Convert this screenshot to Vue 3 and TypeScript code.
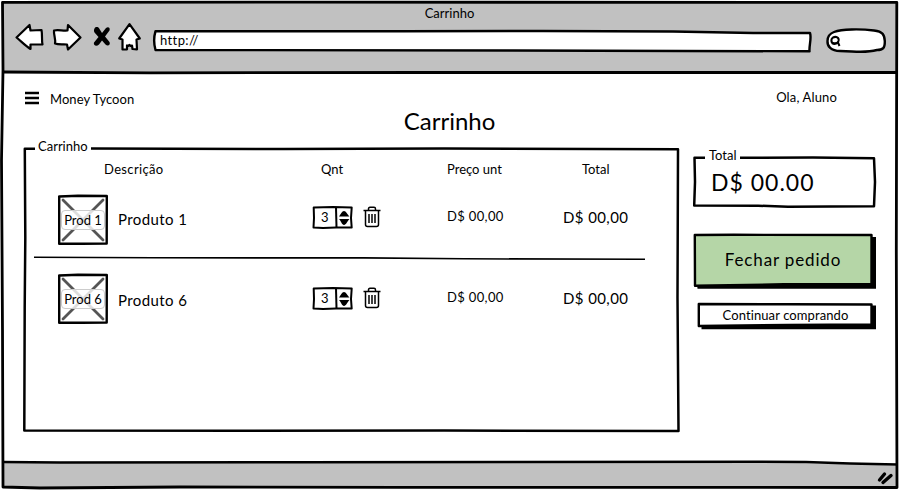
<script setup lang="ts">
interface CartItem {
  id: number
  thumb: string
  name: string
  quantity: number
  unitPrice: string
  total: string
}

const items: CartItem[] = [
  { id: 1, thumb: 'Prod 1', name: 'Produto 1', quantity: 3, unitPrice: 'D$ 00,00', total: 'D$ 00,00' },
  { id: 6, thumb: 'Prod 6', name: 'Produto 6', quantity: 3, unitPrice: 'D$ 00,00', total: 'D$ 00,00' },
]
</script>

<template>
  <div class="window">
    <svg class="sketch" width="899" height="490" viewBox="0 0 899 490" aria-hidden="true">
      <path class="chrome" d="M3 2H897V73H3Z M4 462.500L300 463L760 462L897 465.500V488H4Z" />
      <path class="stroke" d="M2.500 2.300L300 2.200L896.800 2.300L896.300 250L897 487.500L400 487.300L180 487L40 488L3 487L2.500 330L1.500 160L3 70Z" />
      <path class="stroke" d="M3 72L150 72.800L420 72.500L896 72.500" />
      <path class="stroke thin" d="M3 462L60 462.500L300 462.300L760 461.800L806 462L850 463.500L897 464.500" />
    </svg>

    <div class="page">
      <header class="browser">
        <p class="title">Carrinho</p>
        <div class="toolbar">
          <svg class="icon back" width="29" height="28" viewBox="0 0 29 28"><path d="M1.500 14.500L14.500 2L15.500 7.500L26.500 7C27.500 12 26.500 17 27.500 21.500L15.500 21.500L15.500 26C10 22.500 6 18 1.500 14.500Z" /></svg>
          <svg class="icon forward" width="30" height="28" viewBox="0 0 30 28"><path d="M2 7.500C6 6.500 11 8 15.500 7.500L16 2L28.500 14.500L16 26.500L15 21.500C11 21 7 22 3 20.500C4 16 1.500 12 2 7.500Z" /></svg>
          <svg class="stop" width="18" height="22" viewBox="0 0 18 22"><path d="M1.500 2.500C2.500 .5 5.500 .5 6.500 3L9 7L13 2C15 .3 17.500 1.500 16.500 4.500L12 10.500L16.500 16C17.800 18.500 15 21 12.500 18.500L9 14.500L6 18.500C3.500 21 0 19.500 1 16.500L5.500 11L1.500 6.500C.8 5 .8 4 1.500 2.500Z" /></svg>
          <svg class="icon home" width="23" height="29" viewBox="0 0 23 29"><path d="M11.500 1.200L21.800 15.500L18.500 16.500L19 26.300L14.500 26L14 22.500L12.500 23L11.500 22L10 23L9 22.500L9 26.300L4.500 26.500L4.500 16.500L1.200 15.500Z" /></svg>
          <div class="field address">
            <svg class="sketch" width="659" height="23" viewBox="0 0 659 23"><path class="box" d="M2.500 1.200L250 1.200L390 1L520 1.500L600 3L657 3C658.800 8 656 15 656.500 21.300L360 20.500L2.500 20C.8 14 .8 7 2.500 1.200Z" /></svg>
            <span>http://</span>
          </div>
          <svg class="search" width="60" height="26" viewBox="0 0 60 26">
            <path class="box" d="M8 4C16 1 34 .8 48 2.500C57 3.500 58.500 7 58.800 13C59 20 57 22 51 22C38 25.500 28 23 14 23C5 23 1 18 1.500 13C1.500 9 4 5.500 8 4Z" />
            <path class="glass" d="M7 9.500C10 8 13.500 9.500 12.500 13C11.500 16 6 16 5.500 13.500C5.200 12 5.500 10.500 7 9.500ZM6 15.200C9 17 12 14.500 12 14.500L13.500 18" />
          </svg>
        </div>
      </header>

      <main>
        <nav>
          <svg class="menu" width="14" height="14" viewBox="0 0 14 14"><path d="M0 2H14M0 7H14M0 12H14" /></svg>
          <span class="brand">Money Tycoon</span>
          <span class="greeting">Ola, Aluno</span>
        </nav>
        <h1>Carrinho</h1>

        <div class="columns">
          <section class="cart">
            <svg class="sketch" width="656" height="285" viewBox="0 0 656 285">
              <path class="stroke thin" d="M11 .8L.8 .8L1.300 90L.7 160L.3 282.500L220 282.800L420 282.500L654.500 283L653.500 150L654 1.300L420 .6L260 1L67 .6" />
            </svg>
            <div class="cart-body">
              <p class="legend">Carrinho</p>
              <div class="grid head">
                <span class="h-desc">Descrição</span>
                <span class="h-qty">Qnt</span>
                <span>Preço unt</span>
                <span class="h-total">Total</span>
              </div>
              <template v-for="(item, index) in items" :key="item.id">
                <svg v-if="index > 0" class="divider" width="611" height="2" viewBox="0 0 611 2"><path d="M0 .3L120 .8L330 .9L430 1.800L611 2.300" /></svg>
                <div class="grid row">
                  <div class="product">
                    <div class="thumb">
                      <svg class="sketch" width="50" height="50" viewBox="0 0 50 50">
                        <path class="box" d="M1.200 1.500L20 .8L48.800 1L48.700 48.500L24 48.800L1.200 48.800Z" />
                        <path class="cross" d="M5 5L45 45M45 5L5 45" />
                      </svg>
                      <span class="tag">{{ item.thumb }}</span>
                    </div>
                    <span class="name">{{ item.name }}</span>
                  </div>
                  <div class="quantity">
                    <div class="stepper">
                      <svg class="sketch" width="40" height="23" viewBox="0 0 40 23">
                        <path class="box step" d="M.7 1.500L20 1L38.700 1.500L38 12L38.700 21.500L23 21.500L10 22L.5 21.500L1 12Z" />
                        <path class="stroke step" d="M23 1.500L23.500 21.500" />
                        <path class="arrows" d="M26 10.500C27.500 8.500 29 5 31 5C33 5 34.500 8.500 36.500 10.500ZM26 13H36.500C34.500 15 33 19 31 19C29 19 28 15 26 13Z" />
                      </svg>
                      <span>{{ item.quantity }}</span>
                    </div>
                    <svg class="trash" width="18" height="22" viewBox="0 0 18 22"><path d="M.5 4.500H17.500M5.500 4V3C5.500 1.800 6 1.300 7 1.300H11C12 1.300 12.500 1.800 12.500 3V4M2.500 5V18.500C2.500 20 3.200 20.500 4.500 20.500H13.500C14.800 20.500 15.500 20 15.500 18.500V5M6 8V17M9 8V17M12 8V17" /></svg>
                  </div>
                  <span class="price">{{ item.unitPrice }}</span>
                  <span class="sum">{{ item.total }}</span>
                </div>
              </template>
            </div>
          </section>

          <aside>
            <section class="total">
              <svg class="sketch" width="183" height="51" viewBox="0 0 183 51">
                <path class="stroke thin" d="M12 .8L1.500 .8L2 25L1.200 48.500L65 48.700L95 49.800L181 49.200L182 25L181 1.300L120 .6L47 .8" />
              </svg>
              <div class="total-body">
                <p class="total-legend">Total</p>
                <p class="amount">D$ 00.00</p>
              </div>
            </section>
            <button class="checkout" type="button">
              <svg class="sketch" width="183" height="56" viewBox="0 0 183 56">
                <path class="shadow" d="M3 50L177 3L182 3V54.800H3.500Z" />
                <path class="box green" d="M.8 1L40 .8L177.500 1L177.500 50L90 50.300L1 51.800Z" />
              </svg>
              <span>Fechar pedido</span>
            </button>
            <button class="continue" type="button">
              <svg class="sketch" width="179" height="27" viewBox="0 0 179 27">
                <path class="shadow" d="M3.500 22L173 2.500L178 2.500V26.300H3.500Z" />
                <path class="box" d="M.8 1L90 1.300L173.500 1.500L173.500 21.500L90 22L.8 23Z" />
              </svg>
              <span>Continuar comprando</span>
            </button>
          </aside>
        </div>
      </main>

      <footer>
        <svg width="18" height="16" viewBox="0 0 18 16"><path d="M2.500 11L7.500 5M6 13.500L14 6.500" /></svg>
      </footer>
    </div>
  </div>
</template>

<style>
body {
  background: #fff;
}
</style>

<style scoped>
.window {
  display: grid;
  width: 899px;
  height: 490px;
  overflow: hidden;
  background: #fff;
  color: #000;
  font: 13px/16px Lato, 'Liberation Sans', sans-serif;
}
.window > *,
.address > *,
.cart > *,
.total > *,
.thumb > *,
.stepper > *,
button > * {
  grid-area: 1 / 1;
}
p,
h1 {
  margin: 0;
  font-weight: 400;
}
svg {
  display: block;
  flex: none;
  overflow: visible;
  stroke-linejoin: round;
}
.chrome {
  fill: #c1c1c1;
}
.stroke {
  fill: none;
  stroke: #000;
  stroke-width: 2.8;
}
.thin {
  stroke-width: 2.5;
}
.box {
  fill: #fff;
  stroke: #000;
  stroke-width: 2.4;
}
.page {
  display: flex;
  flex-direction: column;
}
.browser {
  height: 74px;
}
.title {
  padding-top: 5px;
  text-align: center;
}
.toolbar {
  display: flex;
  align-items: flex-start;
  padding: 1px 12px 0 15px;
}
.icon {
  fill: #fff;
  stroke: #000;
  stroke-width: 2.2;
  margin-top: 1px;
}
.forward {
  margin-left: 8px;
}
.stop {
  margin: 4px 0 0 11px;
}
.home {
  margin-left: 7px;
}
.address {
  display: grid;
  width: 659px;
  height: 23px;
  margin: 8px 0 0 12px;
}
.address span {
  padding: 2px 0 0 7px;
  letter-spacing: 0.4px;
}
.search {
  margin: 6px 0 0 14px;
}
.glass {
  fill: none;
  stroke: #000;
  stroke-width: 2;
}
main {
  flex: 1;
  padding: 14px 0 0 24px;
}
nav {
  display: flex;
  align-items: flex-start;
  height: 19px;
}
.menu {
  margin: 3px 11px 0 1px;
  stroke: #000;
  stroke-width: 2.4;
}
.brand {
  line-height: 23px;
  letter-spacing: 0.05px;
}
.greeting {
  margin: 0 62px 0 auto;
  line-height: 18px;
  letter-spacing: 0.15px;
}
h1 {
  height: 27px;
  margin-left: -24px;
  font-size: 24px;
  line-height: 27px;
  text-align: center;
}
.columns {
  display: flex;
  gap: 13px;
  margin-top: 14px;
}
.cart {
  display: grid;
  width: 656px;
  height: 285px;
}
.cart-body {
  padding-left: 10px;
}
.legend {
  margin: -10px 0 7px 4px;
}
.grid {
  display: grid;
  grid-template-columns: 255px 134px 116px 82px;
  padding-left: 24px;
}
.head {
  height: 17px;
}
.h-desc {
  padding-left: 46px;
  letter-spacing: 0.35px;
}
.h-qty {
  padding-left: 8px;
}
.h-total {
  padding-left: 19px;
}
.row {
  height: 81px;
  align-items: center;
}
.divider {
  margin-top: -2px;
  fill: none;
  stroke: #000;
  stroke-width: 1.6;
}
.product,
.quantity {
  display: flex;
  align-items: center;
}
.quantity {
  gap: 10px;
  padding-bottom: 3px;
}
.thumb {
  display: grid;
  width: 50px;
  height: 50px;
  place-items: center;
  margin-top: 3px;
}
.divider + .row .thumb {
  margin-top: -1px;
}
.cross {
  stroke: #555;
  stroke-width: 2.8;
  stroke-linecap: round;
}
.tag {
  z-index: 1;
  box-sizing: border-box;
  width: 44px;
  height: 20px;
  margin-top: -1px;
  border: 1px solid #ccc;
  border-radius: 4px;
  background: rgb(255 255 255 / 80%);
  line-height: 18px;
  text-align: center;
  white-space: nowrap;
}
.name {
  margin-left: 10px;
  font-size: 15px;
  letter-spacing: 0.4px;
}
.stepper {
  display: grid;
  width: 40px;
  height: 23px;
}
.stepper span {
  padding: 3px 0 0 8px;
}
.step {
  stroke-width: 2;
}
.trash {
  fill: none;
  stroke: #000;
  stroke-width: 1.5;
}
.price {
  padding-bottom: 5px;
  letter-spacing: 0.35px;
}
.sum {
  padding-bottom: 3px;
  font-size: 15px;
  letter-spacing: 0.4px;
}
aside {
  width: 183px;
  padding-top: 9px;
}
.total {
  display: grid;
  height: 51px;
}
.total-legend {
  margin: -10px 0 0 16px;
}
.amount {
  padding-left: 18px;
  font-size: 23px;
  line-height: 38px;
  letter-spacing: 1px;
}
button {
  display: grid;
  width: 183px;
  padding: 0;
  border: 0;
  background: none;
  color: inherit;
  font: inherit;
  text-align: center;
}
.checkout {
  height: 56px;
  margin: 26px 0 0 1px;
}
.checkout span {
  padding: 16px 5px 0 0;
  font-size: 17px;
  line-height: 20px;
  letter-spacing: 0.85px;
}
.shadow {
  fill: #000;
}
.green {
  fill: #b5d6a7;
}
.continue {
  width: 179px;
  height: 27px;
  margin: 13px 0 0 5px;
}
.continue span {
  padding: 4px 4px 0 0;
  letter-spacing: 0.1px;
}
footer {
  display: flex;
  justify-content: flex-end;
  height: 28px;
  padding: 0 4px 0 0;
  align-items: center;
}
footer svg {
  margin-top: 2px;
}
footer path {
  stroke: #000;
  stroke-width: 3.4;
  stroke-linecap: round;
}
</style>
